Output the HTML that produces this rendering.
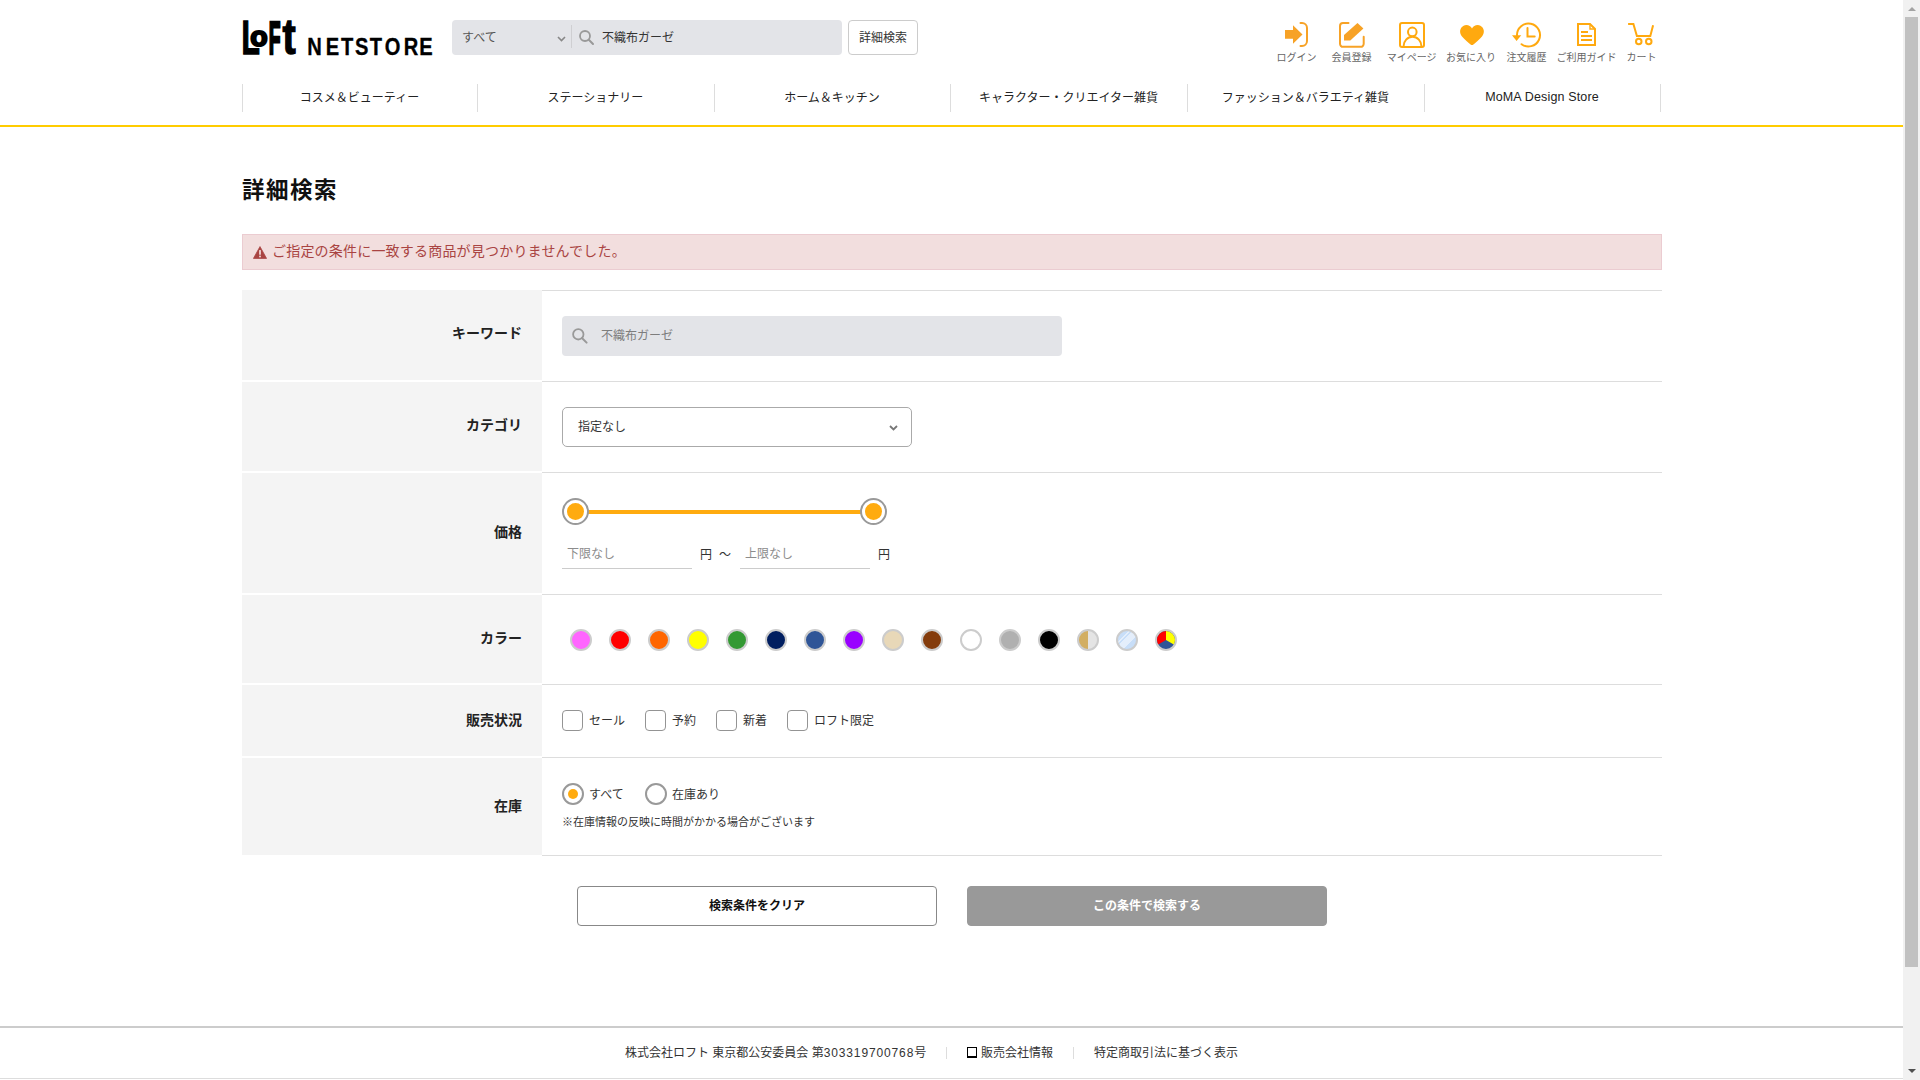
<!DOCTYPE html>
<html lang="ja">
<head>
<meta charset="utf-8">
<title>詳細検索 | ロフト ネットストア</title>
<style>
*{box-sizing:border-box;margin:0;padding:0}
html,body{width:1920px;height:1080px;overflow:hidden;background:#fff}
body{position:relative;font-family:"Liberation Sans","Noto Sans CJK JP",sans-serif;font-size:12px;color:#333;line-height:20px}
.abs{position:absolute}
/* header */
#logo{position:absolute;left:240px;top:14px;width:200px;height:48px}
#hsearch{position:absolute;left:452px;top:20px;width:390px;height:35px;background:#e3e4e8;border-radius:4px}
#hsearch .sel{position:absolute;left:10px;top:8px;line-height:20px;font-size:12px;color:#555}
#hsearch .sep{position:absolute;left:119px;top:5px;width:1px;height:23px;background:#cfcfd2}
#hsearch .kw{position:absolute;left:150px;top:8px;line-height:20px;font-size:12px;color:#333}
#hdetail{position:absolute;left:848px;top:20px;width:70px;height:35px;border:1px solid #ccc;border-radius:4px;background:#fff;text-align:center;line-height:35px;font-size:12px;color:#333}
.hicon{position:absolute;top:18px;width:70px;height:50px;text-align:center}
.hicon svg{position:absolute;left:15px;top:0;width:40px;height:32px;overflow:visible}
.hicon span{position:absolute;left:-10px;right:-10px;top:32px;font-size:10px;line-height:14px;color:#666;white-space:nowrap}
.hl{position:absolute;top:51px;width:80px;text-align:center;font-size:10px;line-height:14px;color:#666;white-space:nowrap}
/* nav */
#nav{position:absolute;left:242px;top:84px;width:1420px;height:28px;display:flex}
#nav div:first-child{border-left:1px solid #ddd}
#nav div{flex:none;border-right:1px solid #ddd;text-align:center;padding-right:1px;line-height:29px;font-size:12px;color:#222;white-space:nowrap}
#yline{position:absolute;left:0;top:125px;width:1903px;height:2px;background:#ffcc00}
/* main */
h1{position:absolute;left:242px;top:173px;font-size:22.5px;letter-spacing:1.5px;line-height:36px;font-weight:bold;color:#111}
#alert{position:absolute;left:242px;top:234px;width:1420px;height:36px;background:#f2dede;border:1px solid #ebccd1;color:#a94442;font-size:14px;letter-spacing:0.2px;line-height:33px;padding-left:29px}
#alert svg{position:absolute;left:9.5px;top:10.5px;width:14px;height:13px}
.row{position:absolute;left:242px;width:1420px}
.row .th{position:absolute;left:0;top:0;width:300px;bottom:1px;background:#f4f4f4;text-align:right;padding-right:20px;font-size:14px;font-weight:bold;color:#222}
.row .th span{position:absolute;right:20px;line-height:20px}
.row .td{position:absolute;left:300px;right:0;top:0;bottom:0;border-top:1px solid #ddd}
.cdot{position:absolute;top:629px;width:22px;height:22px;border-radius:50%;border:2px solid #ccc;overflow:hidden}
.cb{position:absolute;top:710px;width:21px;height:21px;border:1px solid #949494;border-radius:4px;background:#fff}
.lb{position:absolute;line-height:20px;font-size:12px;color:#333;white-space:nowrap}
.lb.ph{color:#8c8c8c}
.rd{position:absolute;top:783px;width:22px;height:22px;border:2px solid #999;border-radius:50%;background:#fff}
.btn{position:absolute;top:886px;width:360px;height:40px;border-radius:4px;text-align:center;line-height:38px;font-weight:bold;font-size:12px}
.th{position:absolute;left:242px;width:300px;background:#f4f4f4;font-size:14px;font-weight:bold;color:#222}
.th span{position:absolute;right:20px;line-height:20px;white-space:nowrap}
.hr{position:absolute;left:542px;width:1120px;height:1px;background:#ddd}
.hd{position:absolute;top:498px;width:27px;height:27px;border:2px solid #999;border-radius:50%;background:#fff}
.hd i{position:absolute;left:3px;top:3px;width:17px;height:17px;border-radius:50%;background:#ffab0f}
.rd i{position:absolute;left:4px;top:4px;width:10px;height:10px;border-radius:50%;background:#ffab0f}
/* footer */
#footer{position:absolute;left:0;top:1026px;width:1903px;height:53px;border-top:2px solid #ccc;border-bottom:1px solid #ddd}
#footer .lb{top:15px}
/* scrollbar */
#sb{position:absolute;left:1903px;top:0;width:17px;height:1080px;background:#f1f1f1}
#sb .thumb{position:absolute;left:2px;top:17px;width:13px;height:950px;background:#c1c1c1}
#sb .up{position:absolute;left:4.5px;top:7px;width:0;height:0;border-left:4px solid transparent;border-right:4px solid transparent;border-bottom:4px solid #a3a3a3}
#sb .dn{position:absolute;left:4.5px;top:1069px;width:0;height:0;border-left:4px solid transparent;border-right:4px solid transparent;border-top:4px solid #505050}
</style>
</head>
<body>

<!-- HEADER -->
<svg id="logo" viewBox="0 0 200 48">
  <g font-family="Liberation Sans, sans-serif" font-weight="bold" fill="#000" stroke="#000" stroke-linejoin="miter"><text font-size="47.7" stroke-width="1.2" vector-effect="non-scaling-stroke" transform="translate(1.6,40.4) scale(0.63,1)">L</text><text font-size="27.7" stroke-width="2" vector-effect="non-scaling-stroke" transform="translate(10.2,32.2) scale(1.03,1)">o</text><text font-size="46.5" stroke-width="2" vector-effect="non-scaling-stroke" transform="translate(28.7,40) scale(0.416,1)">F</text><text font-size="49.6" stroke-width="1.2" vector-effect="non-scaling-stroke" transform="translate(42.6,40) scale(0.8,1)">t</text><text font-size="23.4" stroke-width="0.3" vector-effect="non-scaling-stroke" x="78.19 99.72 117.44 133.71 150.75 168.47 190.31 208.50" transform="translate(0,40.6) scale(0.86,1)">NETSTORE</text></g>
</svg>

<div id="hsearch">
  <span class="sel">すべて</span>
  <svg class="abs" style="left:105px;top:16px;width:9px;height:6px" viewBox="0 0 9 6"><path d="M1 1 L4.5 4.5 L8 1" fill="none" stroke="#888" stroke-width="1.6"/></svg>
  <div class="sep"></div>
  <svg class="abs" style="left:126px;top:9px;width:17px;height:17px" viewBox="0 0 17 17"><circle cx="7" cy="7" r="5" fill="none" stroke="#999" stroke-width="1.8"/><path d="M10.8 10.8 L15 15" stroke="#999" stroke-width="2" stroke-linecap="round"/></svg>
  <span class="kw">不織布ガーゼ</span>
</div>
<div id="hdetail">詳細検索</div>

<svg class="abs" style="left:1270px;top:15px;width:400px;height:40px" viewBox="1270 15 400 40">
  <!-- login -->
  <g fill="#f7a226" stroke="none">
    <path d="M1285 30 H1293 V25.3 L1302.5 34.5 L1293 43.7 V38.8 H1285 Z"/>
    <path d="M1300.5 23 H1302 a5 5 0 0 1 5 5 V41 a5 5 0 0 1 -5 5 H1300.5" fill="none" stroke="#f7a226" stroke-width="2" stroke-linecap="round"/>
  </g>
  <!-- register -->
  <g fill="#f7a226">
    <path d="M1348.5 23 H1343 a3 3 0 0 0 -3 3 V43.8 a3 3 0 0 0 3 3 H1360.7 a3 3 0 0 0 3 -3 V36.8" fill="none" stroke="#f7a226" stroke-width="2" stroke-linecap="round"/>
    <path d="M1357.5 23 L1363.4 28.4 L1350.3 40.6 H1344 V35 Z"/>
  </g>
  <!-- mypage -->
  <g fill="none" stroke="#ffa90f" stroke-width="2">
    <rect x="1400" y="23" width="24" height="24" rx="2"/>
    <circle cx="1412.3" cy="31.9" r="4.3"/>
    <path d="M1403.5 46.5 a9 9.7 0 0 1 18 0"/>
  </g>
  <!-- heart -->
  <path fill="#ffa90f" d="M1472 28.6 C1470.6 25.6 1466.6 24 1463.6 25.8 C1459.6 28 1459 33 1462 36.5 C1464.5 39.5 1468.6 42.8 1470.6 44.4 Q1472 45.5 1473.4 44.4 C1475.4 42.8 1479.5 39.5 1482 36.5 C1485 33 1484.4 28 1480.4 25.8 C1477.4 24 1473.4 25.6 1472 28.6 Z"/>
  <!-- history -->
  <g fill="none" stroke="#ffa90f" stroke-width="2">
    <path d="M1517 35.2 A11.5 11.5 0 1 1 1521.6 44.2" stroke-linecap="round"/>
    <path d="M1527.5 28 V36.5 H1534.7" stroke-linecap="round"/>
    <path d="M1512 35.3 H1521.25 L1516.6 41 Z" fill="#ffa90f" stroke="none"/>
  </g>
  <!-- guide -->
  <g fill="none" stroke="#ffa90f" stroke-width="2">
    <path d="M1578 24 H1590 L1595 29 V45 H1578 Z"/>
    <path d="M1590 24.5 V29 H1594.5" stroke-width="1.4"/>
    <path d="M1581 32 H1588 M1581 36 H1592 M1581 40 H1592"/>
  </g>
  <!-- cart -->
  <g fill="none" stroke="#ffa90f" stroke-width="2">
    <path d="M1628.1 24 H1633.4 L1636.9 36 H1650.3 L1653.1 25.3"/>
    <circle cx="1638.75" cy="41.4" r="2.75"/>
    <circle cx="1648.75" cy="41.4" r="2.75"/>
  </g>
</svg>
<span class="hl" style="left:1256.5px">ログイン</span>
<span class="hl" style="left:1311.5px">会員登録</span>
<span class="hl" style="left:1371.7px">マイページ</span>
<span class="hl" style="left:1431.0px">お気に入り</span>
<span class="hl" style="left:1486.5px">注文履歴</span>
<span class="hl" style="left:1546.5px">ご利用ガイド</span>
<span class="hl" style="left:1601.5px">カート</span>


<!-- NAV -->
<div id="nav">
  <div style="width:236px">コスメ＆ビューティー</div>
  <div style="width:237px">ステーショナリー</div>
  <div style="width:236px">ホーム＆キッチン</div>
  <div style="width:237px">キャラクター・クリエイター雑貨</div>
  <div style="width:237px">ファッション＆バラエティ雑貨</div>
  <div style="width:236px"><span style="position:relative;top:-1px;font-size:12.5px;letter-spacing:0.15px">MoMA Design Store</span></div>
</div>
<div id="yline"></div>

<!-- MAIN -->
<h1>詳細検索</h1>
<div id="alert">
  <svg viewBox="0 0 15 14"><path d="M7.5 0.6 L14.6 13.4 L0.4 13.4 Z" fill="#a94442" stroke="#a94442" stroke-width="0.8" stroke-linejoin="round"/><rect x="6.6" y="4.4" width="1.8" height="5" fill="#f2dede"/><rect x="6.6" y="10.4" width="1.8" height="1.8" fill="#f2dede"/></svg>
  ご指定の条件に一致する商品が見つかりませんでした。
</div>

<div class="th" style="top:290px;height:90px"><span style="top:32.5px">キーワード</span></div>
<div class="hr" style="top:290px"></div>
<div class="th" style="top:382px;height:89px"><span style="top:33.0px">カテゴリ</span></div>
<div class="hr" style="top:381px"></div>
<div class="th" style="top:473px;height:120px"><span style="top:48.5px">価格</span></div>
<div class="hr" style="top:472px"></div>
<div class="th" style="top:595px;height:88px"><span style="top:32.7px">カラー</span></div>
<div class="hr" style="top:594px"></div>
<div class="th" style="top:685px;height:71px"><span style="top:25.0px">販売状況</span></div>
<div class="hr" style="top:684px"></div>
<div class="th" style="top:758px;height:97px"><span style="top:37.5px">在庫</span></div>
<div class="hr" style="top:757px"></div>
<div class="hr" style="top:855px"></div>
<div class="abs" style="left:562px;top:316px;width:500px;height:40px;background:#e3e4e8;border-radius:4px">
  <svg class="abs" style="left:9px;top:11px;width:18px;height:18px" viewBox="0 0 18 18"><circle cx="7.3" cy="7.3" r="5.2" fill="none" stroke="#999" stroke-width="1.8"/><path d="M11.2 11.2 L15.6 15.6" stroke="#999" stroke-width="2" stroke-linecap="round"/></svg>
  <span class="lb ph" style="left:39px;top:10px;color:#7d7d7d">不織布ガーゼ</span>
</div>
<div class="abs" style="left:562px;top:407px;width:350px;height:40px;background:#fff;border:1px solid #aaa;border-radius:5px">
  <span class="lb" style="left:15px;top:9px">指定なし</span>
  <svg class="abs" style="left:326px;top:17px;width:9px;height:6px" viewBox="0 0 9 6"><path d="M1 1 L4.5 4.5 L8 1" fill="none" stroke="#777" stroke-width="1.8"/></svg>
</div>
<div class="abs" style="left:575px;top:510px;width:298px;height:4px;background:#ffab0f"></div>
<div class="hd" style="left:562px"><i></i></div>
<div class="hd" style="left:860px"><i></i></div>
<div class="abs" style="left:562px;top:568px;width:130px;height:1px;background:#ccc"></div>
<span class="lb ph" style="left:567px;top:544px">下限なし</span>
<span class="lb" style="left:700px;top:545px">円</span>
<span class="lb" style="left:719px;top:545px">～</span>
<div class="abs" style="left:740px;top:568px;width:130px;height:1px;background:#ccc"></div>
<span class="lb ph" style="left:745px;top:544px">上限なし</span>
<span class="lb" style="left:878px;top:545px">円</span>
<div class="cdot" style="left:570px;background:#ff66ff"></div>
<div class="cdot" style="left:609px;background:#ff0000"></div>
<div class="cdot" style="left:648px;background:#ff6600"></div>
<div class="cdot" style="left:687px;background:#ffff00"></div>
<div class="cdot" style="left:726px;background:#339933"></div>
<div class="cdot" style="left:765px;background:#001e60"></div>
<div class="cdot" style="left:804px;background:#2f5597"></div>
<div class="cdot" style="left:843px;background:#9900ff"></div>
<div class="cdot" style="left:882px;background:#e8d8b8"></div>
<div class="cdot" style="left:921px;background:#843c0c"></div>
<div class="cdot" style="left:960px;background:#ffffff"></div>
<div class="cdot" style="left:999px;background:#b0b0b0"></div>
<div class="cdot" style="left:1038px;background:#000000"></div>
<div class="cdot" style="left:1077px;background:linear-gradient(90deg,#d2ae62 0,#d2ae62 50%,#e4e4e4 50%,#e4e4e4 100%)"></div>
<div class="cdot" style="left:1116px;background:linear-gradient(135deg,#c8def8 0,#c8def8 28%,#e4eefb 28%,#e4eefb 34%,#c8def8 34%,#c8def8 40%,#e4eefb 40%,#e4eefb 66%,#c8def8 66%)"></div>
<div class="cdot" style="left:1155px;background:#2f5597"><svg style="display:block;width:18px;height:18px" viewBox="-9 -9 18 18"><path d="M0 0 L0 -10 A10 10 0 0 1 8.66 5 Z" fill="#ffff00"/><path d="M0 0 L-8.66 5 A10 10 0 0 1 0 -10 Z" fill="#ff0000"/></svg></div>
<div class="cb" style="left:562px"></div><span class="lb" style="left:589px;top:711px">セール</span>
<div class="cb" style="left:645px"></div><span class="lb" style="left:672px;top:711px">予約</span>
<div class="cb" style="left:716px"></div><span class="lb" style="left:743px;top:711px">新着</span>
<div class="cb" style="left:787px"></div><span class="lb" style="left:814px;top:711px">ロフト限定</span>
<div class="rd" style="left:562px"><i></i></div><span class="lb" style="left:589px;top:785px">すべて</span>
<div class="rd" style="left:645px"></div><span class="lb" style="left:672px;top:785px">在庫あり</span>
<span class="lb" style="left:562px;top:812px;font-size:11px">※在庫情報の反映に時間がかかる場合がございます</span>
<div class="btn" style="left:577px;background:#fff;border:1px solid #888;color:#111">検索条件をクリア</div>
<div class="btn" style="left:967px;background:#999;border:1px solid #999;color:#fff">この条件で検索する</div>


<!-- FOOTER -->
<div id="footer">
<span class="lb" style="left:625px">株式会社ロフト 東京都公安委員会 第<span style="letter-spacing:0.87px">303319700768</span>号</span>
<div class="abs" style="left:946px;top:19px;width:1px;height:12px;background:#ddd"></div>
<div class="abs" style="left:967px;top:19px;width:10px;height:11px;border:1px solid #000;border-bottom-width:2px"></div>
<span class="lb" style="left:981px">販売会社情報</span>
<div class="abs" style="left:1073px;top:19px;width:1px;height:12px;background:#ddd"></div>
<span class="lb" style="left:1094px">特定商取引法に基づく表示</span>
</div>

<!-- SCROLLBAR -->
<div id="sb"><div class="up"></div><div class="thumb"></div><div class="dn"></div></div>

</body>
</html>
